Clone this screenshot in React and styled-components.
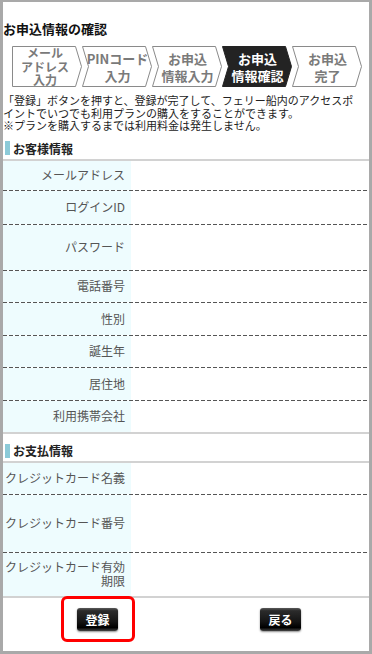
import React from "react";
import styled, { createGlobalStyle } from "styled-components";

const Global = createGlobalStyle`
  html, body { margin: 0; padding: 0; background: #fff; }
  body { font-family: "Noto Sans CJK JP", "Noto Sans", sans-serif; }
`;

const Frame = styled.div`
  width: 372px;
  height: 654px;
  box-sizing: border-box;
  border-style: solid;
  border-color: #a9a9a9;
  border-width: 2px 3px 3px 3px;
  background: #fff;
  overflow: hidden;
  display: flex;
  flex-direction: column;
  font-family: "Noto Sans CJK JP", "Noto Sans", sans-serif;
`;

const Title = styled.h1`
  margin: 0;
  padding-top: 19px;
  font-size: 13px;
  line-height: 16px;
  font-weight: 700;
  color: #111;
`;

const Steps = styled.div`
  display: flex;
  margin: 9px 0 0 9px;
  height: 41px;
`;

const StepBox = styled.div`
  position: relative;
  flex: none;
  width: 70px;
  height: 41px;
  box-sizing: border-box;
  padding: 0 4px 0 ${(p) => (p.$first ? 0 : 5)}px;
  display: flex;
  align-items: center;
  justify-content: center;
  text-align: center;
  color: ${(p) => (p.$active ? "#fff" : "#7a7a7a")};
  font-size: ${(p) => p.$fs}px;
  line-height: ${(p) => p.$lh}px;
  font-weight: 700;
`;

const StepShape = styled.svg`
  position: absolute;
  left: 0;
  top: 0;
  overflow: visible;
`;

const StepText = styled.span`
  position: relative;
  white-space: nowrap;
`;

const Desc = styled.div`
  margin: 7px 0 0 0;
  font-size: 11px;
  line-height: 12.5px;
  color: #222;
`;

const DescLine = styled.span`
  display: block;
  white-space: nowrap;
`;

const SectionHeader = styled.div`
  display: flex;
  align-items: center;
  gap: 3px;
  height: 29px;
  box-sizing: border-box;
  padding: ${(p) => p.$pad}px 0 0 2px;
  border-bottom: 2px solid #d2d2d2;
  font-size: 12px;
  font-weight: 700;
  color: #222;
`;

const Bar = styled.span`
  width: 5px;
  height: 14px;
  background: #8ccad8;
  flex: none;
`;

const Table = styled.div`
  display: flex;
  flex-direction: column;
  border-bottom: 2px solid #d2d2d2;
`;

const Row = styled.div`
  display: grid;
  grid-template-columns: 128px 1fr;
  height: ${(p) => p.$h}px;
`;

const Label = styled.div`
  background: #eefcfe;
  display: flex;
  align-items: center;
  justify-content: flex-end;
  text-align: right;
  padding: 0 6px 0 1px;
  font-size: 12px;
  line-height: 14px;
  color: #555;
`;

const Value = styled.div`
  background: #fff;
`;

const Divider = styled.div`
  height: 1px;
  flex: none;
  background: repeating-linear-gradient(to right, #555 0 4px, transparent 4px 6px);
`;

const ButtonBar = styled.div`
  display: grid;
  grid-template-columns: 189px 1fr;
  justify-items: center;
  align-items: start;
  padding-top: 10px;
  height: 50px;
  box-sizing: border-box;
`;

const ButtonSlot = styled.div`
  position: relative;
  display: inline-flex;
`;

const Button = styled.button`
  width: 41px;
  height: 23px;
  padding: 0;
  border: none;
  border-radius: 3px;
  background: linear-gradient(#5a5a5a 0, #2b2b2b 12%, #141414 60%, #000 85%, #444 100%);
  color: #fff;
  font-family: "Noto Sans CJK JP", sans-serif;
  font-size: 12px;
  font-weight: 700;
  box-shadow: 0 1px 2px rgba(0, 0, 0, 0.45);
`;

const Highlight = styled.span`
  position: absolute;
  top: -12px;
  left: -16px;
  right: -17px;
  bottom: -11px;
  border: 3px solid #f00;
  border-radius: 6px;
  pointer-events: none;
`;

const steps = [
  { lines: ["メール", "アドレス", "入力"], fs: 12, lh: 13.5 },
  { lines: ["PINコード", "入力"], fs: 13, lh: 17 },
  { lines: ["お申込", "情報入力"], fs: 13, lh: 17 },
  { lines: ["お申込", "情報確認"], fs: 13, lh: 17, active: true },
  { lines: ["お申込", "完了"], fs: 13, lh: 17 },
];

const descLines = [
  "「登録」ボタンを押すと、登録が完了して、フェリー船内のアクセスポ",
  "イントでいつでも利用プランの購入をすることができます。",
  "※プランを購入するまでは利用料金は発生しません。",
];

function Step({ step, first }) {
  const pts = first
    ? "0.5,0.5 63.5,0.5 69.5,20.5 63.5,40.5 0.5,40.5"
    : "0.5,0.5 63.5,0.5 69.5,20.5 63.5,40.5 0.5,40.5 6.5,20.5";
  return (
    <StepBox $first={first} $active={step.active} $fs={step.fs} $lh={step.lh}>
      <StepShape width="70" height="41" viewBox="0 0 70 41">
        <polygon
          points={pts}
          fill={step.active ? "#232323" : "#fff"}
          stroke={step.active ? "#232323" : "#8a8a8a"}
          strokeWidth="1"
        />
      </StepShape>
      <StepText>
        {step.lines.map((l, i) => (
          <React.Fragment key={i}>
            {i > 0 && <br />}
            {l}
          </React.Fragment>
        ))}
      </StepText>
    </StepBox>
  );
}

function InfoTable({ rows }) {
  return (
    <Table>
      {rows.map((r, i) => (
        <React.Fragment key={i}>
          {i > 0 && <Divider />}
          <Row $h={r.h}>
            <Label>{r.label}</Label>
            <Value />
          </Row>
        </React.Fragment>
      ))}
    </Table>
  );
}

const customer = [
  { label: "メールアドレス", h: 29 },
  { label: "ログインID", h: 33 },
  { label: "パスワード", h: 45 },
  { label: "電話番号", h: 31 },
  { label: "性別", h: 32 },
  { label: "誕生年", h: 31 },
  { label: "居住地", h: 32 },
  { label: "利用携帯会社", h: 31 },
];

const payment = [
  { label: "クレジットカード名義", h: 31 },
  { label: "クレジットカード番号", h: 57 },
  { label: "クレジットカード有効期限", h: 43 },
];

export default function App() {
  return (
    <>
      <Global />
      <Frame>
        <Title>お申込情報の確認</Title>
        <Steps>
          {steps.map((s, i) => (
            <Step key={i} step={s} first={i === 0} />
          ))}
        </Steps>
        <Desc>
          {descLines.map((l, i) => (
            <DescLine key={i}>{l}</DescLine>
          ))}
        </Desc>
        <SectionHeader $pad={6}>
          <Bar />
          お客様情報
        </SectionHeader>
        <InfoTable rows={customer} />
        <SectionHeader $pad={7}>
          <Bar />
          お支払情報
        </SectionHeader>
        <InfoTable rows={payment} />
        <ButtonBar>
          <ButtonSlot>
            <Button>登録</Button>
            <Highlight />
          </ButtonSlot>
          <ButtonSlot>
            <Button>戻る</Button>
          </ButtonSlot>
        </ButtonBar>
      </Frame>
    </>
  );
}
